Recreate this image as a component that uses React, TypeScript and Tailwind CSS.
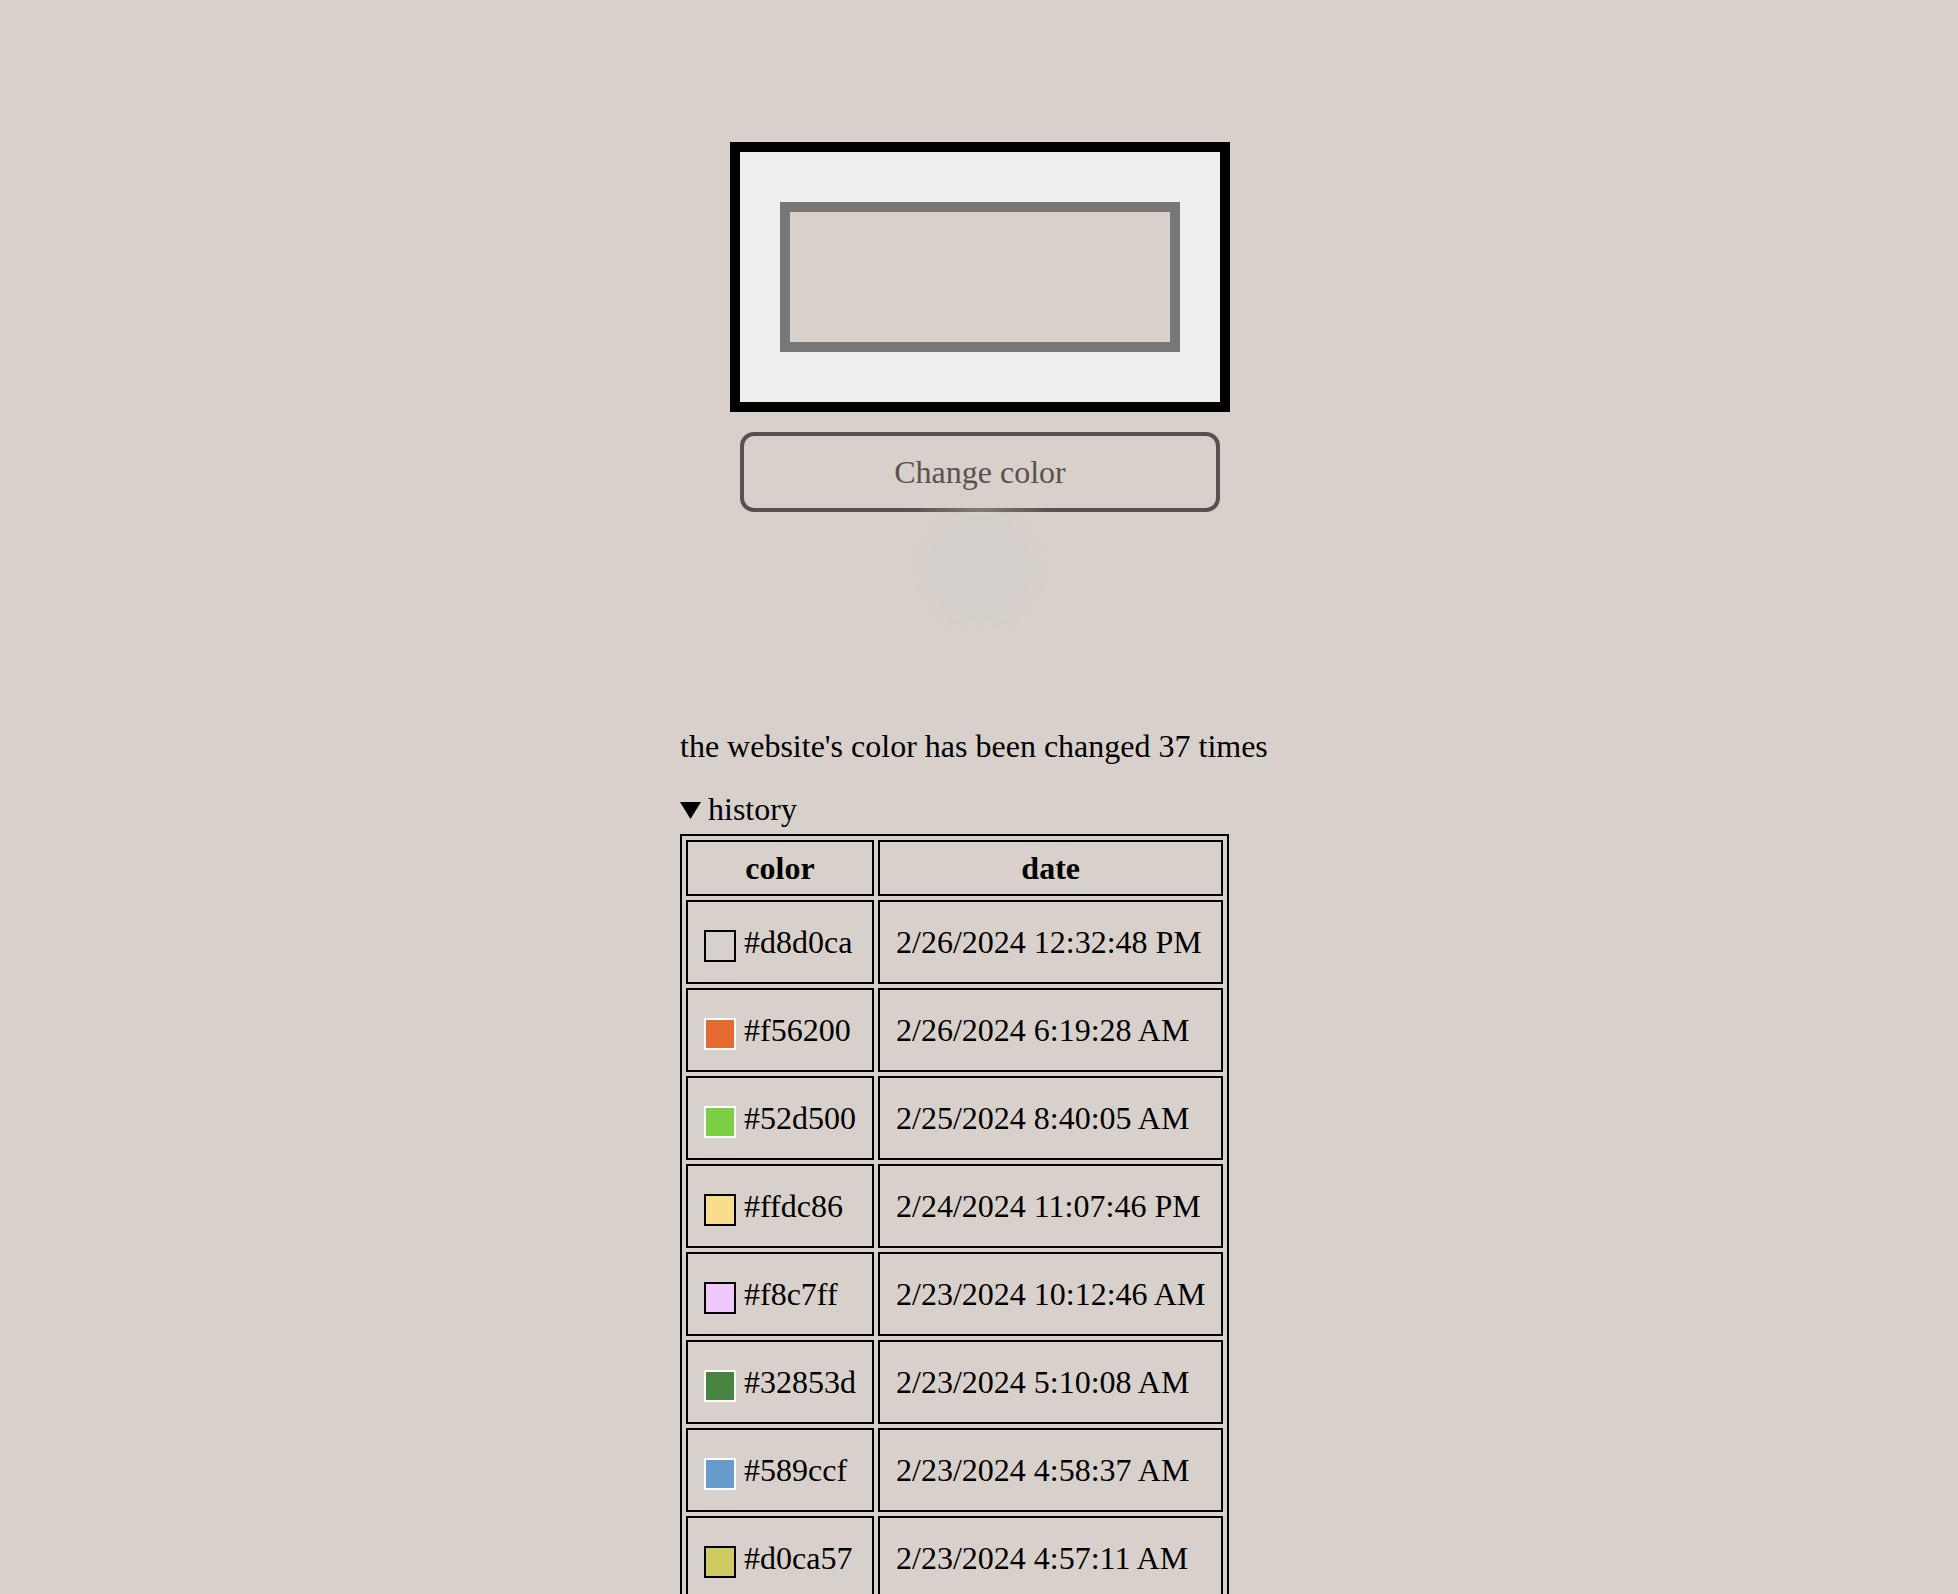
import React from 'react'

interface HistoryEntry {
  hex: string
  shown: string
  edge: 'dark' | 'light'
  date: string
}

const history: HistoryEntry[] = [
  { hex: '#d8d0ca', shown: '#d8d0ca', edge: 'dark', date: '2/26/2024 12:32:48 PM' },
  { hex: '#f56200', shown: '#e56a30', edge: 'light', date: '2/26/2024 6:19:28 AM' },
  { hex: '#52d500', shown: '#7bd143', edge: 'light', date: '2/25/2024 8:40:05 AM' },
  { hex: '#ffdc86', shown: '#f9dc8c', edge: 'dark', date: '2/24/2024 11:07:46 PM' },
  { hex: '#f8c7ff', shown: '#efc9fb', edge: 'dark', date: '2/23/2024 10:12:46 AM' },
  { hex: '#32853d', shown: '#488341', edge: 'light', date: '2/23/2024 5:10:08 AM' },
  { hex: '#589ccf', shown: '#669bcb', edge: 'light', date: '2/23/2024 4:58:37 AM' },
  { hex: '#d0ca57', shown: '#cfca61', edge: 'dark', date: '2/23/2024 4:57:11 AM' },
]

const Swatch = ({ color, edge }: { color: string; edge: 'dark' | 'light' }) => (
  <span
    className={`inline-block h-8 w-8 border-2 align-middle ${edge === 'dark' ? 'border-black' : 'border-white'}`}
    style={{ backgroundColor: color }}
  />
)

export default function App() {
  return (
    <div className="min-h-screen bg-[#d8d0ca] font-['Liberation_Serif',serif] text-[32px] text-black">
      <div className="mx-auto w-[602px] pl-[2px] pt-[142px]">
        {/* preview frame */}
        <div className="mx-auto flex h-[270px] w-[500px] items-center justify-center border-[10px] border-black bg-[#efefef]">
          <div className="h-[150px] w-[400px] border-[10px] border-[#777777] bg-[#d8d0ca]" />
        </div>

        <div className="relative mx-auto mt-5 w-[480px]">
          <button className="relative z-10 flex h-[80px] w-full items-center justify-center rounded-[14px] border-4 border-[#57524f] font-['Liberation_Serif',serif] text-[32px] text-[#57524f]">
            Change color
          </button>
          {/* faint gleam left over from the click */}
          <div className="pointer-events-none absolute left-[170px] top-[76px] z-20 h-[4px] w-[140px] bg-gradient-to-r from-transparent via-[#8c8782] to-transparent opacity-80" />
          <div className="pointer-events-none absolute left-[188px] top-[84px] h-[104px] w-[104px] rounded-full bg-[#d3d0cd] opacity-70 blur-md" />
        </div>

        <p className="mt-[216px] leading-[37px]">the website's color has been changed 37 times</p>

        <details open className="mt-[26px]">
          <summary className="flex cursor-pointer list-none items-center leading-[37px] [&::-webkit-details-marker]:hidden">
            <svg width="21" height="17" viewBox="0 0 21 17" className="mr-[7px] mt-[1px] shrink-0">
              <path d="M0 0 L21 0 L10.5 17 Z" fill="#000" />
            </svg>
            history
          </summary>
          <table className="mt-[6px] border-separate border-spacing-1 border-2 border-solid border-black">
            <thead>
              <tr>
                <th className="h-[56px] border-2 border-solid border-black px-4 py-0 text-center font-bold">color</th>
                <th className="h-[56px] border-2 border-solid border-black px-4 py-0 text-center font-bold">date</th>
              </tr>
            </thead>
            <tbody>
              {history.map((entry) => (
                <tr key={entry.date}>
                  <td className="h-[84px] whitespace-nowrap border-2 border-solid border-black px-4 py-0">
                    <Swatch color={entry.shown} edge={entry.edge} /> {entry.hex}
                  </td>
                  <td className="h-[84px] whitespace-nowrap border-2 border-solid border-black px-4 py-0">{entry.date}</td>
                </tr>
              ))}
            </tbody>
          </table>
        </details>
      </div>
    </div>
  )
}
